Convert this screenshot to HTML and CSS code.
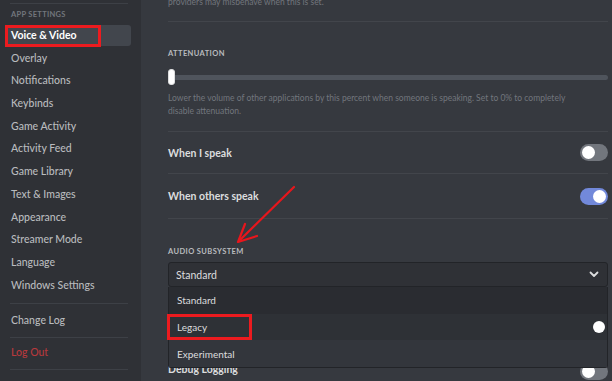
FILE: index.html
```html
<!DOCTYPE html>
<html>
<head>
<meta charset="utf-8">
<link rel="stylesheet" href="styles.css">
</head>
<body>
<div class="app">
  <nav class="sidebar">
    <div class="side-sep side-sep--top"></div>
    <div class="side-header">APP SETTINGS</div>
    <div class="side-item is-selected">Voice &amp; Video<span class="mark mark--nav"></span></div>
    <div class="side-item">Overlay</div>
    <div class="side-item">Notifications</div>
    <div class="side-item">Keybinds</div>
    <div class="side-item">Game Activity</div>
    <div class="side-item">Activity Feed</div>
    <div class="side-item">Game Library</div>
    <div class="side-item">Text &amp; Images</div>
    <div class="side-item">Appearance</div>
    <div class="side-item">Streamer Mode</div>
    <div class="side-item">Language</div>
    <div class="side-item">Windows Settings</div>
    <div class="side-sep"></div>
    <div class="side-item">Change Log</div>
    <div class="side-sep side-sep--tight"></div>
    <div class="side-item side-item--danger">Log Out</div>
    <div class="side-sep side-sep--tight"></div>
  </nav>
  <main class="main">
    <p class="note">providers may misbehave when this is set.</p>
    <div class="divider divider--note"></div>
    <h3 class="title title--att">ATTENUATION</h3>
    <div class="slider"><div class="slider-track"></div><div class="slider-handle"></div></div>
    <p class="desc">Lower the volume of other applications by this percent when someone is speaking. Set to 0% to completely disable attenuation.</p>
    <div class="divider divider--att"></div>
    <div class="row row--first"><span class="row-label">When I speak</span><span class="toggle"><span class="knob"></span></span></div>
    <div class="divider"></div>
    <div class="row row--second"><span class="row-label">When others speak</span><span class="toggle is-on"><span class="knob"></span></span></div>
    <div class="divider"></div>
    <h3 class="title title--audio">AUDIO SUBSYSTEM</h3>
    <div class="select">
      <div class="select-value"><span>Standard</span>
        <svg class="chev" width="10" height="7" viewBox="0 0 10 7"><path d="M1.5 1.5 L5 5 L8.5 1.5" fill="none" stroke="#dcddde" stroke-width="1.8" stroke-linecap="round" stroke-linejoin="round"/></svg>
      </div>
      <div class="menu">
        <div class="option option--a">Standard</div>
        <div class="option option--b"><span>Legacy</span><span class="ghost-knob"></span><span class="mark mark--opt"></span></div>
        <div class="option option--c">Experimental</div>
      </div>
    </div>
    <div class="row row--debug"><span class="row-label">Debug Logging</span><span class="toggle toggle--debug"><span class="knob"></span></span></div>
    <svg class="arrow" width="70" height="70" viewBox="0 0 70 70">
      <path d="M66 4 L11 58" stroke="#e8161c" stroke-width="2.2" fill="none" stroke-linecap="round"/>
      <path d="M17 41 L10 59 L29 53" stroke="#e8161c" stroke-width="2.2" fill="none" stroke-linecap="round" stroke-linejoin="round"/>
    </svg>
  </main>
</div>
</body>
</html>
```
FILE: styles.css
```css
* { box-sizing: border-box; }
html, body { margin: 0; padding: 0; }
body {
  width: 612px;
  height: 381px;
  overflow: hidden;
  background: #36393f;
  font-family: Lato, "Open Sans", sans-serif;
}
.app { display: flex; height: 381px; }

.sidebar {
  width: 141px;
  flex: none;
  background: #2f3136;
  display: flex;
  flex-direction: column;
}
.side-sep {
  height: 1px;
  background: #3d4046;
  margin: 6px 13px 6px 10px;
}
.side-sep--top { margin-top: 3px; margin-bottom: 0; }
.side-sep--tight { margin-top: 4px; margin-bottom: 4px; }
.side-header {
  margin: 6px 0 5px 11px;
  font-size: 7.5px;
  line-height: 10px;
  font-weight: 700;
  letter-spacing: 0.3px;
  color: #72767d;
}
.side-item {
  position: relative;
  margin: 0 10px 1.7px 5px;
  height: 21px;
  line-height: 21px;
  padding-left: 6px;
  font-size: 10.5px;
  font-weight: 500;
  color: #b9bbbe;
  border-radius: 3px;
}
.side-item.is-selected {
  background: #42464d;
  color: #fff;
  font-weight: 700;
}
.side-item--danger { color: #b8393d; }

.mark {
  position: absolute;
  border: 3px solid #ec1b1f;
  pointer-events: none;
}
.mark--nav { left: 0; top: 0; width: 96px; height: 22px; }
.mark--opt { left: -2px; top: 0; width: 85px; height: 26px; }

.main {
  position: relative;
  flex: 1;
  padding: 0 4px 0 27px;
  overflow: hidden;
}
.note {
  margin: -4px 0 0;
  font-size: 8.5px;
  line-height: 13px;
  color: #72767d;
}
.divider {
  height: 1px;
  background: #42454b;
}
.divider--note { margin-top: 12px; }
.divider--att { margin-top: 13.5px; }
.title {
  margin: 0;
  font-size: 7.5px;
  line-height: 10px;
  font-weight: 700;
  letter-spacing: 0.4px;
  color: #b9bbbe;
}
.title--att { margin-top: 27px; }
.title--audio { margin-top: 28px; }

.slider {
  position: relative;
  margin-top: 10px;
  height: 16px;
  display: flex;
  align-items: center;
}
.slider-track {
  flex: 1;
  height: 5px;
  margin-left: 4px;
  border-radius: 3px;
  background: #4f545c;
}
.slider-handle {
  position: absolute;
  left: 0;
  top: 0;
  width: 7px;
  height: 16px;
  border-radius: 3px;
  background: #fff;
  border: 1px solid #dcddde;
}
.desc {
  margin: 6.5px 0 0;
  font-size: 8.5px;
  line-height: 13px;
  color: #72767d;
  padding-right: 20px;
}

.row {
  display: flex;
  align-items: center;
  justify-content: space-between;
}
.row--first { height: 41px; }
.row--second { height: 44px; }
.row-label {
  font-size: 10.5px;
  font-weight: 700;
  color: #dcddde;
}
.toggle {
  position: relative;
  width: 28px;
  height: 17px;
  border-radius: 9px;
  background: #72767d;
}
.toggle .knob {
  position: absolute;
  top: 2px;
  left: 2px;
  width: 13px;
  height: 13px;
  border-radius: 50%;
  background: #fff;
}
.toggle.is-on { background: #7289da; }
.toggle.is-on .knob { left: 13px; }

.select {
  position: relative;
  margin-top: 5px;
  z-index: 2;
}
.select-value {
  height: 25px;
  display: flex;
  align-items: center;
  justify-content: space-between;
  padding: 0 8px 0 7px;
  background: #2f3136;
  border: 1px solid #222428;
  border-radius: 3px;
  font-size: 10.5px;
  color: #dcddde;
}
.chev { display: block; }
.menu {
  position: absolute;
  left: 0;
  right: 0;
  top: 100%;
  background: #2f3136;
  border: 1px solid #222428;
  border-top: none;
  border-radius: 0 0 3px 3px;
}
.option {
  position: relative;
  height: 26.7px;
  display: flex;
  align-items: center;
  justify-content: space-between;
  padding: 0 8px 0 8px;
  font-size: 10px;
  color: #dcddde;
}
.option--a { background: #2a2c31; }
.option--b { background: #2e3136; }
.option--c { background: #33363c; }
.ghost-knob {
  width: 12px;
  height: 12px;
  border-radius: 50%;
  background: #fff;
  margin-right: -6px;
}

.row--debug {
  margin-top: 72px;
  height: 20px;
  position: relative;
  z-index: 1;
}
.toggle--debug { margin-top: 4px; }

.arrow {
  position: absolute;
  left: 87px;
  top: 183px;
  z-index: 3;
}
```
